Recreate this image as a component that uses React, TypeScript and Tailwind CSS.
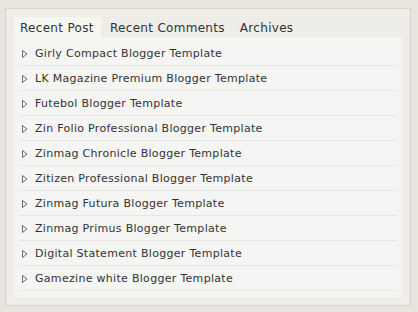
const posts = [
  "Girly Compact Blogger Template",
  "LK Magazine Premium Blogger Template",
  "Futebol Blogger Template",
  "Zin Folio Professional Blogger Template",
  "Zinmag Chronicle Blogger Template",
  "Zitizen Professional Blogger Template",
  "Zinmag Futura Blogger Template",
  "Zinmag Primus Blogger Template",
  "Digital Statement Blogger Template",
  "Gamezine white Blogger Template",
];

function Arrow() {
  return (
    <svg width="6" height="8" viewBox="0 0 6 8" className="shrink-0">
      <path d="M0.5 0.5 L5 4 L0.5 7.5 Z" fill="none" stroke="#6b6b6b" strokeWidth="1" />
    </svg>
  );
}

export default function App() {
  return (
    <div className="w-[418px] h-[312px] bg-[#e8e5de] pt-[8px] pl-[5px] font-['DejaVu_Sans',Verdana,sans-serif] text-[#333]">
      <div className="w-[406px] h-[298px] border border-[#d6d3cc] bg-[#eeede8] px-[8px] pt-[8px]">
        <div className="flex h-[20px] items-center text-[12px] tracking-[0.3px]">
          <div className="h-full w-[87px] px-[6px] pt-[1px] bg-[#f7f7f2] flex items-center">Recent Post</div>
          <div className="ml-[9px] pt-[1px]">Recent Comments</div>
          <div className="ml-[15px] pt-[1px]">Archives</div>
        </div>
        <ul className="bg-[#f5f5f3] h-[260px] px-[5px] pt-[4px]">
          {posts.map((p) => (
            <li key={p} className="h-[25px] border-b border-[#e6e6e2] flex items-center pl-[3px] pt-[2px] gap-[7px] text-[11px] tracking-[0.3px]">
              <Arrow />
              <span>{p}</span>
            </li>
          ))}
        </ul>
      </div>
    </div>
  );
}
